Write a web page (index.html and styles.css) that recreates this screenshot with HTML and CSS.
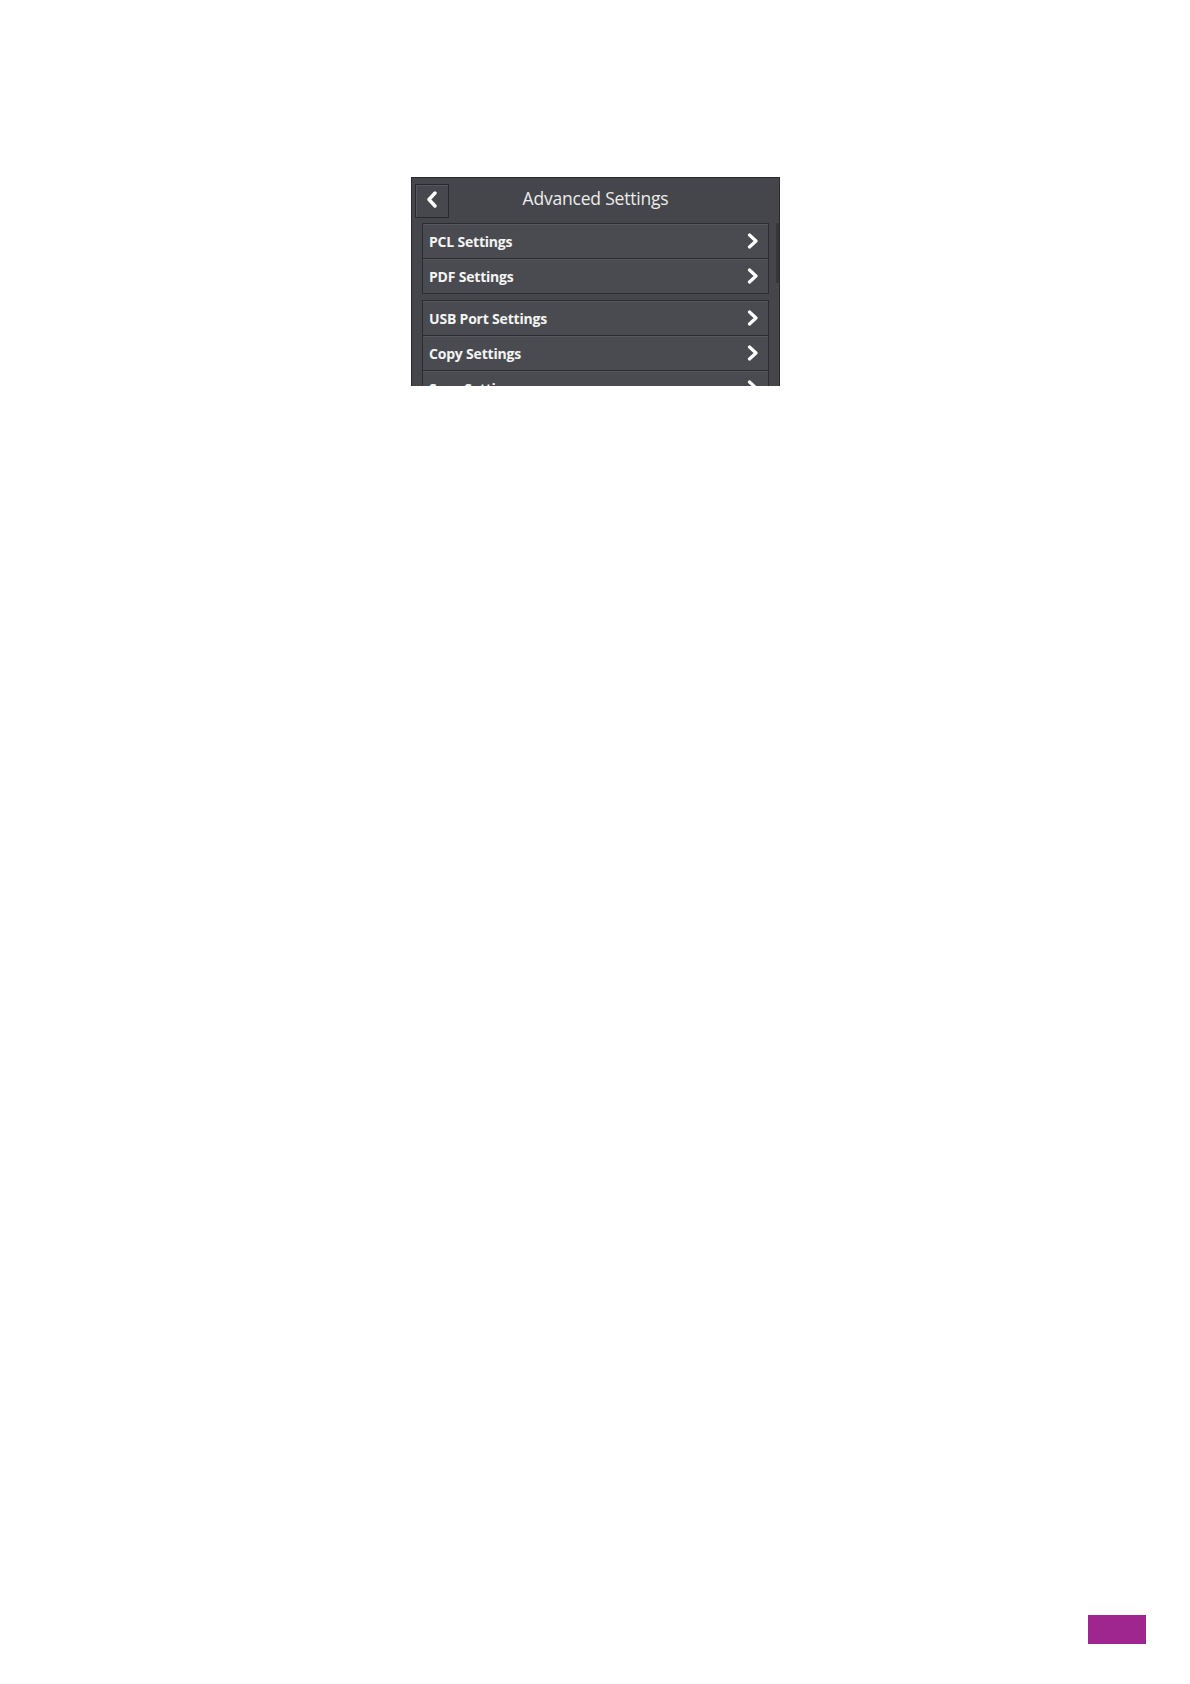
FILE: index.html
```html
<!DOCTYPE html>
<html lang="en">
<head>
  <meta charset="UTF-8" />
  <title>Advanced Settings</title>
  <link rel="stylesheet" href="styles.css">
</head>
<body>
  <div class="page">
    <div class="panel">
      <div class="header">
        <div class="back-btn">
          <svg width="12" height="18" viewBox="0 0 12 18"><polyline points="9,2 3,8.5 9,15" fill="none" stroke="#fff" stroke-width="3.4" stroke-linecap="round" stroke-linejoin="round"/></svg>
        </div>
        <div class="title">Advanced Settings</div>
        <div class="spacer"></div>
      </div>
      <div class="content">
        <div class="lists">
          <div class="group">
            <div class="row"><span>PCL Settings</span><svg class="chev" width="12" height="16" viewBox="0 0 12 16"><polyline points="2.5,2 9,8 2.5,14" fill="none" stroke="#fff" stroke-width="3.2" stroke-linecap="round" stroke-linejoin="round"/></svg></div>
            <div class="row"><span>PDF Settings</span><svg class="chev" width="12" height="16" viewBox="0 0 12 16"><polyline points="2.5,2 9,8 2.5,14" fill="none" stroke="#fff" stroke-width="3.2" stroke-linecap="round" stroke-linejoin="round"/></svg></div>
          </div>
          <div class="group">
            <div class="row"><span>USB Port Settings</span><svg class="chev" width="12" height="16" viewBox="0 0 12 16"><polyline points="2.5,2 9,8 2.5,14" fill="none" stroke="#fff" stroke-width="3.2" stroke-linecap="round" stroke-linejoin="round"/></svg></div>
            <div class="row"><span>Copy Settings</span><svg class="chev" width="12" height="16" viewBox="0 0 12 16"><polyline points="2.5,2 9,8 2.5,14" fill="none" stroke="#fff" stroke-width="3.2" stroke-linecap="round" stroke-linejoin="round"/></svg></div>
            <div class="row"><span>Scan Settings</span><svg class="chev" width="12" height="16" viewBox="0 0 12 16"><polyline points="2.5,2 9,8 2.5,14" fill="none" stroke="#fff" stroke-width="3.2" stroke-linecap="round" stroke-linejoin="round"/></svg></div>
          </div>
        </div>
        <div class="scrollbar"></div>
      </div>
    </div>
    <div class="page-mark"></div>
  </div>
</body>
</html>
```
FILE: styles.css
```css
html, body {
  margin: 0; padding: 0;
  background: #fff;
  font-family: "Open Sans", "Liberation Sans", sans-serif;
}
.page {
  height: 1684px;
  display: flex; flex-direction: column;
}
.panel {
  margin: 177px 0 0 411px;
  width: 369px; height: 209px;
  box-sizing: border-box;
  border: 1px solid #2a2a2e;
  border-bottom: none;
  background: #45464b;
  overflow: hidden;
}
.header {
  display: grid;
  grid-template-columns: 34px 1fr 34px;
  align-items: center;
  height: 45px;
  padding: 0 3px;
}
.back-btn {
  width: 34px; height: 34px;
  box-sizing: border-box;
  border: 1px solid #2a2a2e;
  box-shadow: inset 1px 1px 0 #56575c;
  background: #47484d;
  display: flex; justify-content: center; align-items: center;
  padding-bottom: 2px;
}
.title {
  text-align: center;
  color: #ececec;
  font-size: 17.5px;
  font-weight: 400;
  letter-spacing: -0.2px;
  padding-bottom: 5px;
}
.content {
  display: flex;
  align-items: flex-start;
  padding-left: 10px;
}
.lists {
  width: 347px;
  display: flex; flex-direction: column;
  gap: 6px;
}
.group {
  border: 1px solid #2c2c30;
  background: #4a4b50;
}
.row {
  height: 34px;
  display: flex; align-items: center; justify-content: space-between;
  padding: 0 9px 0 6px;
  color: #f4f4f4;
  font-size: 14px;
  font-weight: 700;
  letter-spacing: -0.2px;
  box-shadow: inset 0 1px 0 #56575c;
}
.row + .row {
  border-top: 1px solid #2c2c30;
}
.scrollbar {
  margin-left: 7px;
  width: 3px; height: 60px;
  background: #36373b;
}
.page-mark {
  margin-top: auto;
  align-self: flex-end;
  margin-right: 44px;
  margin-bottom: 40px;
  width: 58px; height: 29px;
  background: #a0268f;
}
```
